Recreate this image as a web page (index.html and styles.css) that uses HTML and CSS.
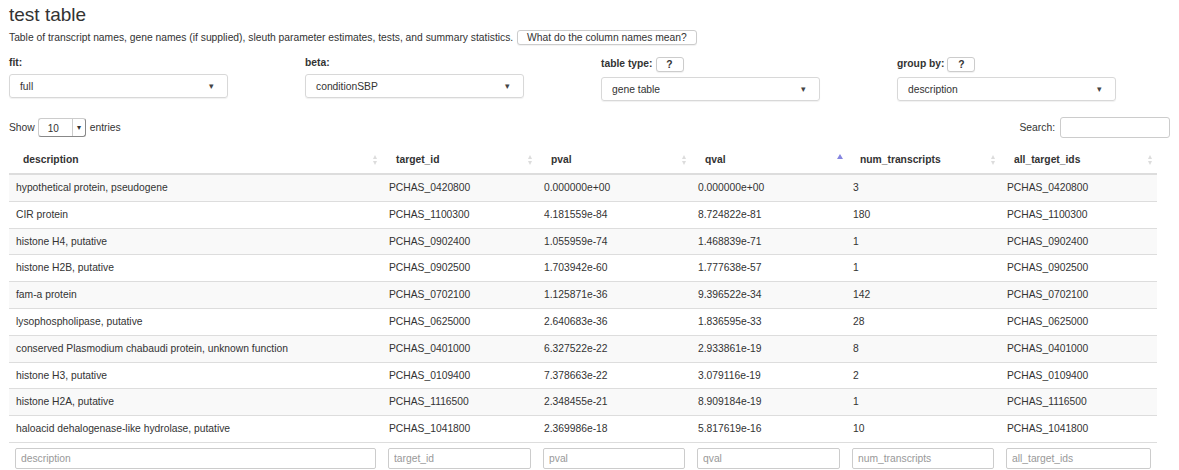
FILE: index.html
```html
<!DOCTYPE html>
<html>
<head>
<meta charset="utf-8">
<link rel="stylesheet" href="styles.css">
</head>
<body>
<h1 class="title">test table</h1>
<p class="intro">Table of transcript names, gene names (if supplied), sleuth parameter estimates, tests, and summary statistics. <button class="btn btn-wide">What do the column names mean?</button></p>

<div class="controls">
  <div class="ctl">
    <div class="lbl">fit:</div>
    <div class="select"><span>full</span><span class="caret">&#9662;</span></div>
  </div>
  <div class="ctl">
    <div class="lbl">beta:</div>
    <div class="select"><span>conditionSBP</span><span class="caret">&#9662;</span></div>
  </div>
  <div class="ctl">
    <div class="lbl lbl-q">table type:<button class="btn btn-q">?</button></div>
    <div class="select"><span>gene table</span><span class="caret">&#9662;</span></div>
  </div>
  <div class="ctl">
    <div class="lbl lbl-q">group by:<button class="btn btn-q">?</button></div>
    <div class="select"><span>description</span><span class="caret">&#9662;</span></div>
  </div>
</div>

<div class="dt-top">
  <div class="len">Show <span class="len-sel"><span class="len-val">10</span><span class="len-btn">&#9662;</span></span> entries</div>
  <div class="search">Search: <span class="search-box"></span></div>
</div>

<table class="dt">
  <colgroup>
    <col class="c1"><col class="c2"><col class="c3"><col class="c4"><col class="c5"><col class="c6">
  </colgroup>
  <thead>
    <tr>
      <th>description<span class="sort"><i class="up"></i><i class="dn"></i></span></th>
      <th>target_id<span class="sort"><i class="up"></i><i class="dn"></i></span></th>
      <th>pval<span class="sort"><i class="up"></i><i class="dn"></i></span></th>
      <th>qval<span class="sort"><i class="up active"></i></span></th>
      <th>num_transcripts<span class="sort"><i class="up"></i><i class="dn"></i></span></th>
      <th>all_target_ids<span class="sort"><i class="up"></i><i class="dn"></i></span></th>
    </tr>
  </thead>
  <tbody>
    <tr><td>hypothetical protein, pseudogene</td><td>PCHAS_0420800</td><td>0.000000e+00</td><td>0.000000e+00</td><td>3</td><td>PCHAS_0420800</td></tr>
    <tr><td>CIR protein</td><td>PCHAS_1100300</td><td>4.181559e-84</td><td>8.724822e-81</td><td>180</td><td>PCHAS_1100300</td></tr>
    <tr><td>histone H4, putative</td><td>PCHAS_0902400</td><td>1.055959e-74</td><td>1.468839e-71</td><td>1</td><td>PCHAS_0902400</td></tr>
    <tr><td>histone H2B, putative</td><td>PCHAS_0902500</td><td>1.703942e-60</td><td>1.777638e-57</td><td>1</td><td>PCHAS_0902500</td></tr>
    <tr><td>fam-a protein</td><td>PCHAS_0702100</td><td>1.125871e-36</td><td>9.396522e-34</td><td>142</td><td>PCHAS_0702100</td></tr>
    <tr><td>lysophospholipase, putative</td><td>PCHAS_0625000</td><td>2.640683e-36</td><td>1.836595e-33</td><td>28</td><td>PCHAS_0625000</td></tr>
    <tr><td>conserved Plasmodium chabaudi protein, unknown function</td><td>PCHAS_0401000</td><td>6.327522e-22</td><td>2.933861e-19</td><td>8</td><td>PCHAS_0401000</td></tr>
    <tr><td>histone H3, putative</td><td>PCHAS_0109400</td><td>7.378663e-22</td><td>3.079116e-19</td><td>2</td><td>PCHAS_0109400</td></tr>
    <tr><td>histone H2A, putative</td><td>PCHAS_1116500</td><td>2.348455e-21</td><td>8.909184e-19</td><td>1</td><td>PCHAS_1116500</td></tr>
    <tr><td>haloacid dehalogenase-like hydrolase, putative</td><td>PCHAS_1041800</td><td>2.369986e-18</td><td>5.817619e-16</td><td>10</td><td>PCHAS_1041800</td></tr>
  </tbody>
  <tfoot>
    <tr>
      <td><input class="fin" placeholder="description"></td>
      <td><input class="fin" placeholder="target_id"></td>
      <td><input class="fin" placeholder="pval"></td>
      <td><input class="fin" placeholder="qval"></td>
      <td><input class="fin" placeholder="num_transcripts"></td>
      <td><input class="fin" placeholder="all_target_ids"></td>
    </tr>
  </tfoot>
</table>
</body>
</html>
```

FILE: styles.css
```css
html, body {
  margin: 0;
  padding: 0;
  background: #fff;
}
body {
  padding: 0 9px;
  font-family: "Liberation Sans", Arial, sans-serif;
  font-size: 10.8px;
  color: #333;
  overflow: hidden;
}
.title {
  margin: 4px 0 0 0;
  font-size: 19px;
  line-height: 22px;
  font-weight: normal;
  color: #333;
}
.intro {
  margin: 4px 0 0 0;
  line-height: 16px;
  font-size: 10.3px;
}
.btn {
  font-family: inherit;
  color: #333;
  background: #fff;
  border: 1px solid #ccc;
  border-radius: 3px;
  box-shadow: 0 1px 1px rgba(0,0,0,0.06);
  padding: 0;
  height: 15px;
  line-height: 13px;
  vertical-align: middle;
}
.btn-wide {
  font-size: 10.3px;
  padding: 0 9px;
  margin-left: 1px;
  position: relative;
  top: -1px;
}
.btn-q {
  width: 28px;
  font-weight: bold;
  font-size: 10.3px;
  margin-left: 3px;
}
.controls {
  display: grid;
  grid-template-columns: 296px 296px 296px 296px;
  margin-top: 9px;
  align-items: start;
}
.lbl {
  font-weight: bold;
  font-size: 10.3px;
  line-height: 14px;
  height: 14px;
  margin-top: 1px;
  margin-bottom: 4px;
}
.lbl-q {
  height: 17px;
  line-height: 17px;
  margin-bottom: 5px;
  margin-top: 0;
}
.select {
  box-sizing: border-box;
  width: 219px;
  height: 24px;
  border: 1px solid #d8d8d8;
  border-radius: 3px;
  box-shadow: 0 1px 1px rgba(0,0,0,0.06);
  display: flex;
  align-items: center;
  justify-content: space-between;
  padding: 0 13px 0 10px;
  font-size: 10.3px;
}
.caret {
  font-size: 9px;
  color: #444;
}
.dt-top {
  width: 1161px;
  display: flex;
  justify-content: space-between;
  align-items: center;
  margin-top: 16px;
  height: 21px;
  font-size: 10.3px;
}
.len {
  display: flex;
  align-items: center;
}
.len-sel {
  box-sizing: border-box;
  display: inline-flex;
  width: 48px;
  height: 19px;
  margin: 0 4px 0 3px;
  border: 1px solid #ccc;
  border-right-color: #888;
  border-bottom-color: #888;
  border-radius: 3px;
  background: #fff;
  font-size: 10px;
}
.len-val {
  flex: 1;
  padding-left: 9px;
  line-height: 19px;
}
.len-btn {
  width: 12px;
  border-left: 1px solid #ccc;
  font-size: 8px;
  text-align: center;
  line-height: 17px;
  color: #333;
}
.search {
  display: flex;
  align-items: center;
}
.search-box {
  box-sizing: border-box;
  display: inline-block;
  width: 110px;
  height: 21px;
  margin-left: 5px;
  border: 1px solid #ccc;
  border-radius: 3px;
}
.dt {
  width: 1148px;
  margin-top: 9px;
  border-collapse: collapse;
  table-layout: fixed;
}
.c1 { width: 373px; }
.c2 { width: 155px; }
.c3 { width: 154px; }
.c4 { width: 155px; }
.c5 { width: 154px; }
.c6 { width: 157px; }
.dt th {
  position: relative;
  text-align: left;
  font-weight: bold;
  font-size: 10.3px;
  line-height: 14px;
  padding: 6px 7px 6px 14px;
  border-bottom: 2px solid #ddd;
}
.sort {
  position: absolute;
  right: 4px;
  top: 50%;
  transform: translateY(-50%);
  width: 5px;
  height: 10px;
}
.sort i {
  position: absolute;
  left: 0;
  width: 0;
  height: 0;
  border-left: 2.5px solid transparent;
  border-right: 2.5px solid transparent;
}
.sort .up {
  top: 0;
  border-bottom: 4px solid #dcdcdc;
}
.sort .dn {
  bottom: 0;
  border-top: 4px solid #dcdcdc;
}
.sort .up.active {
  top: -1px;
  border-left-width: 3px;
  border-right-width: 3px;
  border-bottom: 5px solid #8585e0;
}
.dt tbody td {
  padding: 6px 7px;
  line-height: 13.8px;
  font-size: 10.3px;
  border-top: 1px solid #ddd;
  white-space: nowrap;
  overflow: hidden;
}
.dt tbody tr:first-child td {
  border-top: none;
}
.dt tbody tr:nth-child(odd) {
  background: #f9f9f9;
}
.dt tfoot td {
  padding: 5px 6px 0 6px;
  border-top: 1px solid #ddd;
}
.fin {
  box-sizing: border-box;
  width: 100%;
  height: 21px;
  border: 1px solid #ccc;
  border-radius: 2px;
  padding: 0 5px;
  font-family: inherit;
  font-size: 10.3px;
  color: #333;
  background: #fff;
}
.fin::placeholder {
  color: #999;
}
```
